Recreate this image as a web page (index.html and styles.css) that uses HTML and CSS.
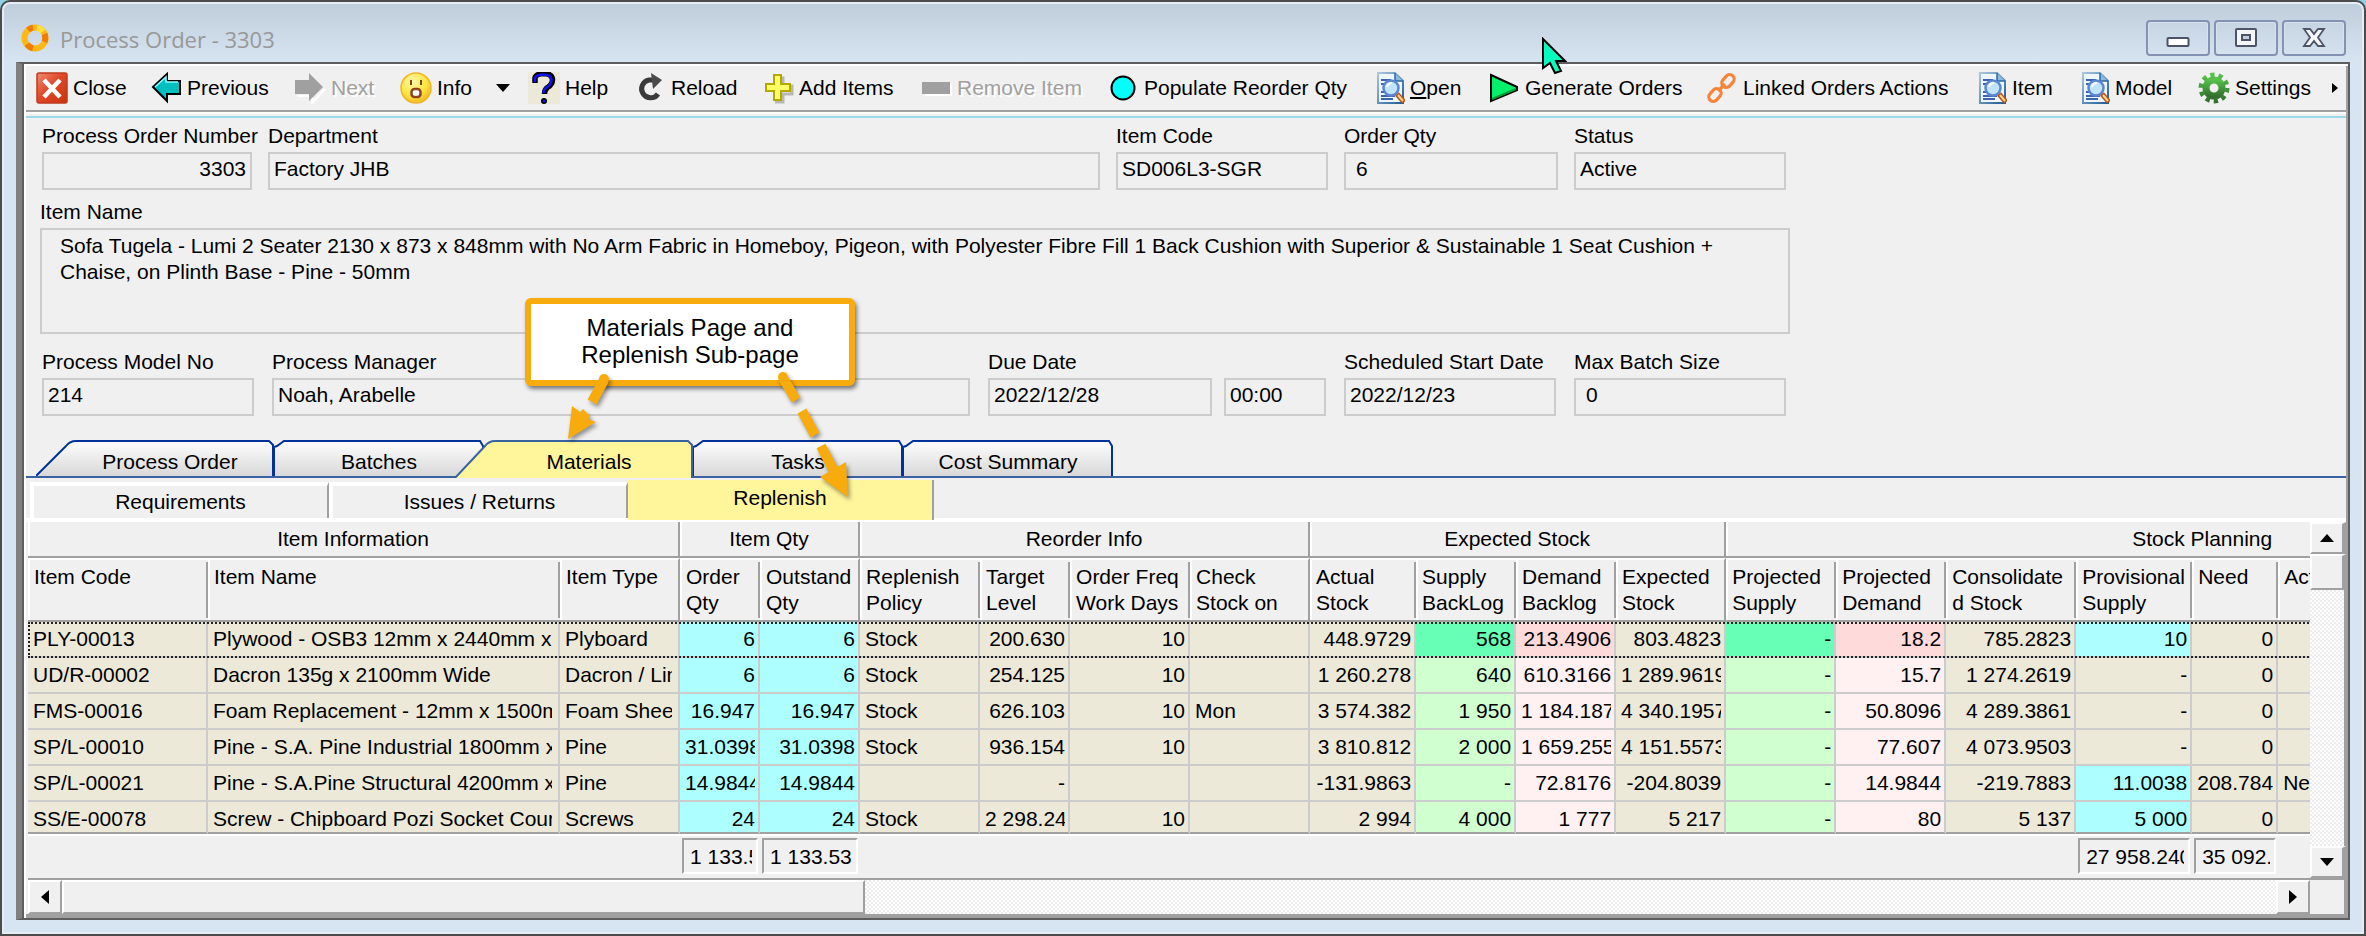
FILE: index.html
```html
<!DOCTYPE html>
<html lang="en">
<head>
<meta charset="utf-8">
<title>Process Order - 3303</title>
<link rel="stylesheet" href="styles.css">
</head>
<body>
<svg class="defs" aria-hidden="true">
  <defs>
    <linearGradient id="g-red" x1="0" y1="0" x2="1" y2="1"><stop offset="0" stop-color="#ee8d72"/><stop offset=".45" stop-color="#e0482a"/><stop offset="1" stop-color="#c8360c"/></linearGradient>
    <radialGradient id="g-face" cx=".4" cy=".3" r=".75"><stop offset="0" stop-color="#fff7b0"/><stop offset=".6" stop-color="#ffe43c"/><stop offset="1" stop-color="#efb51c"/></radialGradient>
    <linearGradient id="g-gear" x1="0" y1="0" x2="0" y2="1"><stop offset="0" stop-color="#57c14b"/><stop offset="1" stop-color="#33702f"/></linearGradient>
    <linearGradient id="g-doc" x1="0" y1="0" x2="1" y2="1"><stop offset="0" stop-color="#a9c6dc"/><stop offset="1" stop-color="#1f5c96"/></linearGradient>
    <linearGradient id="g-tab" x1="0" y1="0" x2="0" y2="1"><stop offset=".1" stop-color="#fafafa"/><stop offset="1" stop-color="#d8d8d8"/></linearGradient>
    <symbol id="i-doc" viewBox="0 0 32 32">
      <path d="M5 1h17l8 8v22H5z" fill="#eef6fd" stroke="url(#g-doc)" stroke-width="2"/>
      <path d="M22 1v8h8" fill="#8db9dc" stroke="#2b6aa3" stroke-width="1.500"/>
      <path d="M8 8h10M8 12h5M8 20h4M8 24h14M8 27h12" stroke="#3d62ae" stroke-width="2"/>
      <circle cx="18" cy="16" r="7.500" fill="#bfe3fb" stroke="#5b86cf" stroke-width="2.500"/>
      <path d="M14 15q1-4 5-4" fill="none" stroke="#fff" stroke-width="2"/>
      <path d="M24 22l7 8" stroke="#b4521b" stroke-width="5"/>
      <path d="M25 23l5 6" stroke="#ffd98a" stroke-width="2"/>
    </symbol>
  </defs>
</svg>
<div class="window">
  <header class="titlebar">
    <svg class="app-icon" viewBox="0 0 30 30" aria-hidden="true" fill="none" stroke-width="6">
      <circle cx="15" cy="15" r="10.500" stroke="#fdb813"/>
      <path d="M8 7a10.500 10.500 0 0 1 5-2.300M24.500 11a10.500 10.500 0 0 1 0 8M13 25.300a10.500 10.500 0 0 1-6-4" stroke="#f07c00"/>
      <path d="M17 4.700a10.500 10.500 0 0 1 6 3.600" stroke="#ffdf3a"/>
    </svg>
    <h1 class="title">Process Order - 3303</h1>
    <div class="window-buttons">
      <button type="button" aria-label="Minimize"><svg viewBox="0 0 24 24"><rect x="1.500" y="12" width="21" height="8" rx="1" fill="#fff" stroke="#4d5468" stroke-width="2"/></svg></button>
      <button type="button" aria-label="Maximize"><svg viewBox="0 0 24 24"><rect x="2" y="3" width="20" height="17" rx="1" fill="#f4f6f8" stroke="#4d5468" stroke-width="2"/><rect x="8" y="9" width="8" height="5" fill="#c4d0de" stroke="#4d5468" stroke-width="2"/></svg></button>
      <button type="button" aria-label="Close window"><svg viewBox="0 0 24 24"><path d="M2 3h6l4 5 4-5h6l-6 8.500 6 8.500h-6l-4-5-4 5H2l6-8.500z" fill="#f4f6f8" stroke="#4d5468" stroke-width="1.800"/></svg></button>
    </div>
  </header>

  <main class="panel">
    <nav class="toolbar" aria-label="Actions">
      <button type="button"><svg viewBox="0 0 32 32"><rect x="1" y="1" width="30" height="30" rx="2" fill="url(#g-red)" stroke="#c03a1c" stroke-width="1.500"/><path d="M8 8l16 17M24 8L8 25" stroke="#fff" stroke-width="4.500"/></svg>Close</button>
      <button type="button"><svg viewBox="0 0 32 32"><path d="M3 15L17 2v7h13v13H17v7z" fill="#00bfbf" stroke="#000" stroke-width="2"/><path d="M5 15L16 5v5h12" fill="none" stroke="#8ff" stroke-width="1.500"/></svg>Previous</button>
      <button type="button" disabled><svg viewBox="0 0 32 32"><path d="M31 17L18 31v-7H3" fill="none" stroke="#fff" stroke-width="2"/><path d="M1 8h14V1l14 14-14 14v-7H1z" fill="#a0a0a0"/></svg>Next</button>
      <button type="button"><svg viewBox="0 0 32 32"><circle cx="16" cy="16" r="15" fill="url(#g-face)" stroke="#f0b429" stroke-width="1.500"/><path d="M11 8v5M21 8v5" stroke="#7a4a10" stroke-width="2"/><rect x="11.500" y="17" width="9" height="8" rx="3" fill="#fff" stroke="#8e4420" stroke-width="2.500"/></svg>Info</button>
      <button type="button" class="drop" aria-label="More info"><svg viewBox="0 0 14 8"><path d="M0 0h14L7 8z"/></svg></button>
      <button type="button"><svg viewBox="0 0 32 32"><path fill="#ece9d8" d="M0 0h32v32H0z"/><path d="M7 11V6q1-4 8-4.500 9 0 9.500 6 0 5-5 8-3 2-3 6.500" fill="none" stroke="#000" stroke-width="5.500"/><path d="M7 10V6q1-3 8-3.500 8 0 8.500 5 0 5-5 8-3 2-3 5.500" fill="none" stroke="#1212e8" stroke-width="2.500"/><circle cx="16" cy="29" r="3" fill="#000"/><circle cx="16" cy="29" r="1.500" fill="#1212e8"/></svg>Help</button>
      <button type="button"><svg viewBox="0 0 32 32"><path d="M19 8h-4a9 9 0 1 0 9 14" fill="none" stroke="#3a3a3a" stroke-width="5"/><path d="M17 1l11 7-9 9z" fill="#4a4a4a"/></svg>Reload</button>
      <button type="button"><svg viewBox="0 0 32 32"><path d="M13 6h8v8h9v8h-9v8h-8" fill="none" stroke="#b8b8b0" stroke-width="3"/><path d="M12 3h7v9h9v7h-9v9h-7v-9H4v-7h8z" fill="#ffff66" stroke="#b3a800" stroke-width="2"/></svg>Add Items</button>
      <button type="button" disabled><svg viewBox="0 0 32 32"><path fill="#fff" d="M5 12h27v12H5z"/><path fill="#a0a0a0" d="M2 10h28v12H2z"/></svg>Remove Item</button>
      <button type="button"><svg viewBox="0 0 32 32"><circle cx="16" cy="16" r="11.500" fill="#0ff" stroke="#000" stroke-width="2"/></svg>Populate Reorder Qty</button>
      <button type="button"><svg><use href="#i-doc"/></svg><span><u>O</u>pen</span></button>
      <button type="button"><svg viewBox="0 0 32 32"><path d="M3 3l26 12v3L3 29z" fill="#00f06c" stroke="#000" stroke-width="2"/><path d="M4 27l24-10" stroke="#00a030" stroke-width="2"/></svg>Generate Orders</button>
      <button type="button"><svg viewBox="0 0 32 32" fill="none" stroke="#f5853b" stroke-width="3.200"><rect x="-7" y="-4.500" width="14" height="9" rx="4.500" transform="translate(22 9) rotate(-48)"/><rect x="-7" y="-4.500" width="14" height="9" rx="4.500" transform="translate(9 23) rotate(-48)"/><path d="M12 19l7-7"/></svg>Linked Orders Actions</button>
      <button type="button"><svg><use href="#i-doc"/></svg>Item</button>
      <button type="button"><svg><use href="#i-doc"/></svg>Model</button>
      <button type="button"><svg viewBox="0 0 32 32"><g fill="none" stroke="url(#g-gear)"><circle cx="16" cy="16" r="8" stroke-width="7"/><circle cx="16" cy="16" r="13" stroke-width="5" stroke-dasharray="4.200 3.969"/></g></svg>Settings</button>
      <button type="button" class="more" aria-label="More actions"><svg viewBox="0 0 6 10"><path d="M0 0l6 5-6 5z"/></svg></button>
    </nav>

    <form class="details">
      <div class="row row--order">
        <div class="field"><label for="po">Process Order Number</label><input id="po" class="num" value="3303" readonly></div>
        <div class="field"><label for="dept">Department</label><input id="dept" value="Factory JHB" readonly></div>
        <div class="field"><label for="code">Item Code</label><input id="code" value="SD006L3-SGR" readonly></div>
        <div class="field"><label for="qty">Order Qty</label><input id="qty" class="indent" value="6" readonly></div>
        <div class="field"><label for="status">Status</label><input id="status" value="Active" readonly></div>
      </div>
      <div class="row row--name">
        <div class="field"><label for="name">Item Name</label><textarea id="name" readonly>Sofa Tugela - Lumi 2 Seater 2130 x 873 x 848mm with No Arm Fabric in Homeboy, Pigeon, with Polyester Fibre Fill 1 Back Cushion with Superior &amp; Sustainable 1 Seat Cushion +
Chaise, on Plinth Base - Pine - 50mm</textarea></div>
      </div>
      <div class="row row--plan">
        <div class="field"><label for="model">Process Model No</label><input id="model" value="214" readonly></div>
        <div class="field"><label for="manager">Process Manager</label><input id="manager" value="Noah, Arabelle" readonly></div>
        <div class="field field--near"><label for="due">Due Date</label><input id="due" value="2022/12/28" readonly></div>
        <div class="field"><input aria-label="Due time" value="00:00" readonly></div>
        <div class="field"><label for="start">Scheduled Start Date</label><input id="start" value="2022/12/23" readonly></div>
        <div class="field"><label for="batch">Max Batch Size</label><input id="batch" class="indent" value="0" readonly></div>
      </div>
    </form>

    <div class="tabs" role="tablist" aria-label="Pages">
      <button type="button" role="tab" class="tab tab--slant"><svg viewBox="0 0 238 36" preserveAspectRatio="none"><path d="M0 36L30 6Q34 1 40 1H233L237 5V36" fill="url(#g-tab)" stroke="#039" stroke-width="2"/></svg><span>Process Order</span></button>
      <button type="button" role="tab" class="tab"><svg viewBox="0 0 210 36" preserveAspectRatio="none"><path d="M0 36V7L3 6 10 1H206L209 6V36" fill="url(#g-tab)" stroke="#039" stroke-width="2"/></svg><span>Batches</span></button>
      <button type="button" role="tab" class="tab tab--slant tab--active" aria-selected="true"><svg viewBox="0 0 238 38" preserveAspectRatio="none"><path d="M0 38L30 6Q34 1 40 1H233L237 5V38" fill="#fff59b" stroke="#3a62a0" stroke-width="2"/></svg><span>Materials</span></button>
      <button type="button" role="tab" class="tab"><svg viewBox="0 0 210 36" preserveAspectRatio="none"><path d="M0 36V7L3 6 10 1H206L209 6V36" fill="url(#g-tab)" stroke="#039" stroke-width="2"/></svg><span>Tasks</span></button>
      <button type="button" role="tab" class="tab"><svg viewBox="0 0 210 36" preserveAspectRatio="none"><path d="M0 36V7L3 6 10 1H206L209 6V36" fill="url(#g-tab)" stroke="#039" stroke-width="2"/></svg><span>Cost Summary</span></button>
    </div>
    <div class="subtabs" role="tablist" aria-label="Material pages">
      <button type="button" role="tab" class="subtab">Requirements</button>
      <button type="button" role="tab" class="subtab">Issues / Returns</button>
      <button type="button" role="tab" class="subtab subtab--active" aria-selected="true">Replenish</button>
    </div>

    <section class="grid">
      <div class="grid-view">
        <table>
          <colgroup>
            <col class="w180"><col class="w352"><col class="w120"><col class="w80"><col class="w100"><col class="w120"><col class="w90"><col class="w120"><col class="w120"><col class="w106"><col class="w100"><col class="w100"><col class="w110"><col class="w110"><col class="w110"><col class="w130"><col class="w116"><col class="w86"><col class="w402">
          </colgroup>
          <thead>
            <tr class="groups"><th colspan="3">Item Information</th><th colspan="2">Item Qty</th><th colspan="4">Reorder Info</th><th colspan="4">Expected Stock</th><th colspan="6">Stock Planning</th></tr>
            <tr class="heads"><th>Item Code</th><th>Item Name</th><th class="end">Item Type</th><th>Order<br>Qty</th><th class="end">Outstand<br>Qty</th><th>Replenish<br>Policy</th><th>Target<br>Level</th><th>Order Freq<br>Work Days</th><th class="end">Check<br>Stock on</th><th>Actual<br>Stock</th><th>Supply<br>BackLog</th><th>Demand<br>Backlog</th><th class="end">Expected<br>Stock</th><th>Projected<br>Supply</th><th>Projected<br>Demand</th><th>Consolidate<br>d Stock</th><th>Provisional<br>Supply</th><th>Need</th><th>Action</th></tr>
          </thead>
          <tbody>
            <tr class="selected"><td><span>PLY-00013</span></td><td><span>Plywood - OSB3 12mm x 2440mm x</span></td><td><span>Plyboard</span></td><td class="n cyan"><span>6</span></td><td class="n cyan"><span>6</span></td><td><span>Stock</span></td><td class="n"><span>200.630</span></td><td class="n"><span>10</span></td><td></td><td class="n"><span>448.9729</span></td><td class="n green"><span>568</span></td><td class="n pink"><span>213.4906</span></td><td class="n"><span>803.4823</span></td><td class="n green"><span>-</span></td><td class="n pink"><span>18.2</span></td><td class="n"><span>785.2823</span></td><td class="n cyan"><span>10</span></td><td class="n"><span>0</span></td><td></td></tr>
            <tr><td><span>UD/R-00002</span></td><td><span>Dacron 135g x 2100mm Wide</span></td><td><span>Dacron / Lining</span></td><td class="n cyan"><span>6</span></td><td class="n cyan"><span>6</span></td><td><span>Stock</span></td><td class="n"><span>254.125</span></td><td class="n"><span>10</span></td><td></td><td class="n"><span>1 260.278</span></td><td class="n green"><span>640</span></td><td class="n pink"><span>610.3166</span></td><td class="n"><span>1 289.9619</span></td><td class="n green"><span>-</span></td><td class="n pink"><span>15.7</span></td><td class="n"><span>1 274.2619</span></td><td class="n"><span>-</span></td><td class="n"><span>0</span></td><td></td></tr>
            <tr><td><span>FMS-00016</span></td><td><span>Foam Replacement - 12mm x 1500mm</span></td><td><span>Foam Sheets</span></td><td class="n cyan"><span>16.947</span></td><td class="n cyan"><span>16.947</span></td><td><span>Stock</span></td><td class="n"><span>626.103</span></td><td class="n"><span>10</span></td><td><span>Mon</span></td><td class="n"><span>3 574.382</span></td><td class="n green"><span>1 950</span></td><td class="n pink"><span>1 184.187</span></td><td class="n"><span>4 340.1957</span></td><td class="n green"><span>-</span></td><td class="n pink"><span>50.8096</span></td><td class="n"><span>4 289.3861</span></td><td class="n"><span>-</span></td><td class="n"><span>0</span></td><td></td></tr>
            <tr><td><span>SP/L-00010</span></td><td><span>Pine - S.A. Pine Industrial 1800mm x</span></td><td><span>Pine</span></td><td class="n cyan"><span>31.0398</span></td><td class="n cyan"><span>31.0398</span></td><td><span>Stock</span></td><td class="n"><span>936.154</span></td><td class="n"><span>10</span></td><td></td><td class="n"><span>3 810.812</span></td><td class="n green"><span>2 000</span></td><td class="n pink"><span>1 659.255</span></td><td class="n"><span>4 151.5573</span></td><td class="n green"><span>-</span></td><td class="n pink"><span>77.607</span></td><td class="n"><span>4 073.9503</span></td><td class="n"><span>-</span></td><td class="n"><span>0</span></td><td></td></tr>
            <tr><td><span>SP/L-00021</span></td><td><span>Pine - S.A.Pine Structural 4200mm x</span></td><td><span>Pine</span></td><td class="n cyan"><span>14.9844</span></td><td class="n cyan"><span>14.9844</span></td><td></td><td class="n"><span>-</span></td><td></td><td></td><td class="n"><span>-131.9863</span></td><td class="n green"><span>-</span></td><td class="n pink"><span>72.8176</span></td><td class="n"><span>-204.8039</span></td><td class="n green"><span>-</span></td><td class="n pink"><span>14.9844</span></td><td class="n"><span>-219.7883</span></td><td class="n cyan"><span>11.0038</span></td><td class="n"><span>208.784</span></td><td><span>New</span></td></tr>
            <tr><td><span>SS/E-00078</span></td><td><span>Screw - Chipboard Pozi Socket Countersunk</span></td><td><span>Screws</span></td><td class="n cyan"><span>24</span></td><td class="n cyan"><span>24</span></td><td><span>Stock</span></td><td class="n"><span>2 298.24</span></td><td class="n"><span>10</span></td><td></td><td class="n"><span>2 994</span></td><td class="n green"><span>4 000</span></td><td class="n pink"><span>1 777</span></td><td class="n"><span>5 217</span></td><td class="n green"><span>-</span></td><td class="n pink"><span>80</span></td><td class="n"><span>5 137</span></td><td class="n cyan"><span>5 000</span></td><td class="n"><span>0</span></td><td></td></tr>
          </tbody>
          <tfoot>
            <tr><td colspan="3"></td><td><div class="total"><span>1 133.53</span></div></td><td><div class="total"><span>1 133.53</span></div></td><td colspan="11"></td><td><div class="total"><span>27 958.240</span></div></td><td><div class="total"><span>35 092.42</span></div></td><td></td></tr>
          </tfoot>
        </table>
      </div>
      <div class="vscroll">
        <button type="button" aria-label="Scroll up"><svg viewBox="0 0 14 8"><path d="M0 8h14L7 0z"/></svg></button>
        <div class="thumb"></div>
        <div class="track"></div>
        <button type="button" aria-label="Scroll down"><svg viewBox="0 0 14 8"><path d="M0 0h14L7 8z"/></svg></button>
      </div>
      <div class="hscroll">
        <button type="button" aria-label="Scroll left"><svg viewBox="0 0 8 14"><path d="M8 0v14L0 7z"/></svg></button>
        <div class="thumb"></div>
        <div class="track"></div>
        <button type="button" aria-label="Scroll right"><svg viewBox="0 0 8 14"><path d="M0 0v14l8-7z"/></svg></button>
      </div>
      <div class="corner"></div>
    </section>
  </main>

  <div class="callout">Materials Page and<br>Replenish Sub-page</div>
  <svg class="arrows" viewBox="0 0 300 130" aria-hidden="true" fill="#f8ab0c" stroke="#f8ab0c" stroke-width="10">
    <path d="M44 10L32 32M223 8l13 22M242 41l13 24M261 76l13 25"/>
    <circle cx="44" cy="9" r="5" stroke="none"/>
    <circle cx="223" cy="7" r="5" stroke="none"/>
    <path stroke="none" d="M12 36l8 6 3-3 7 7-2 3 8 3L8 69zM260 107l26-15 2 35z"/>
  </svg>
  <svg class="cursor" viewBox="0 0 26 38" aria-hidden="true"><path d="M2 2v29l7-5 5 10 6-2-5-10h9z" fill="#00ffc0" stroke="#000" stroke-width="2"/></svg>
</div>
</body>
</html>
```
FILE: styles.css
```css
* { box-sizing: border-box; }

body {
  margin: 0;
  background: #8fd0e2;
  color: #000;
  font: 21px/24px "Liberation Sans", Arial, sans-serif;
}

button, input, textarea { font: inherit; color: inherit; margin: 0; border-radius: 0; }
button { padding: 0; border: 0; background: none; white-space: nowrap; }
svg { display: block; flex: none; }
.defs { position: absolute; width: 0; height: 0; }

.window {
  position: relative;
  display: flex;
  flex-direction: column;
  min-height: 100vh;
  padding: 0 14px 14px 12px;
  border: 2px solid #4c4c4c;
  border-radius: 10px 10px 0 0;
  background: linear-gradient(#bfccd9, #d7e4f1 60px);
  box-shadow: inset 0 0 0 2px #e6edf5;
}

/* Title bar */
.titlebar {
  display: flex;
  align-items: center;
  height: 60px;
  padding: 12px 4px 0 6px;
}
.app-icon { width: 30px; height: 30px; }
.title {
  flex: 1;
  margin: 2px 0 0 10px;
  color: #989898;
  font: 400 22px/30px "Open Sans", sans-serif;
}
.window-buttons { display: flex; gap: 4px; }
.window-buttons button {
  display: grid;
  place-items: center;
  width: 64px;
  height: 36px;
  border: 2px solid #8493b3;
  border-radius: 4px;
  box-shadow: inset 0 0 0 1px #d8e2ee;
}
.window-buttons svg { width: 24px; height: 24px; }

.panel {
  flex: 1;
  display: flex;
  flex-direction: column;
  margin-left: 2px;
  border: 2px solid #5e5e5e;
  border-left: 6px solid #808080;
  background: #f0f0f0;
  box-shadow: inset 2px 0 #5e5e5e, inset 4px 2px #fff, inset -2px -4px #a0a0a0;
  padding: 2px 2px 4px 4px;
}

/* Toolbar */
.toolbar {
  display: grid;
  grid-template-columns:
    114fr 144fr 106fr 90fr 38fr 106fr 128fr 158fr 187fr
    266fr 115fr 218fr 269fr 103fr 120fr 126fr 22fr;
  height: 52px;
  padding: 0 0 8px 10px;
  background: linear-gradient(#a0a0a0, #a0a0a0) 0 44px / 100% 2px no-repeat,
    linear-gradient(#fff, #fff) 0 46px / 100% 2px no-repeat;
  border-bottom: 2px solid #9bd8e8;
}
.toolbar button { display: flex; align-items: center; gap: 5px; min-width: 0; padding-top: 2px; }
.toolbar svg { width: 32px; height: 32px; }
.toolbar button:disabled { color: #a0a0a0; text-shadow: 2px 2px #fff; }
.toolbar .drop { padding-left: 6px; }
.toolbar .drop svg { width: 14px; height: 8px; }
.toolbar .more { padding-left: 8px; }
.toolbar .more svg { width: 6px; height: 10px; }

/* Order details */
.details { padding: 6px 0 24px; }
.row { display: grid; align-items: end; padding-left: 16px; }
.row--order { grid-template-columns: 226fr 848fr 228fr 230fr 212fr 560fr; }
.row--name { grid-template-columns: 1750fr 556fr; margin: 10px 0 16px; padding-left: 14px; }
.row--plan { grid-template-columns: 230fr 716fr 236fr 120fr 230fr 212fr 560fr; }
.field { display: flex; flex-direction: column; gap: 4px; min-width: 0; padding-right: 16px; }
.row--plan .field { padding-right: 18px; }
.row--plan .field--near { padding-right: 12px; }
.row .field:last-child { padding-right: 0; }
.field label { white-space: nowrap; }
.field input, .field textarea {
  width: 100%;
  height: 38px;
  padding: 0 4px 4px;
  border: 2px solid #ccc;
  outline: 0;
  background: #f0f0f0;
}
.field .num { text-align: right; }
.field .indent { padding-left: 10px; }
.field textarea {
  height: 106px;
  padding: 3px 18px;
  line-height: 26px;
  resize: none;
  overflow: hidden;
}

/* Page tabs */
.tabs {
  display: flex;
  align-items: flex-start;
  height: 38px;
  padding-left: 10px;
  background: linear-gradient(#3a62a0, #3a62a0) 0 36px / 100% 2px no-repeat;
}
.tab { position: relative; width: 210px; height: 36px; padding-top: 8px; }
.tab svg { position: absolute; inset: 0; width: 100%; height: 100%; }
.tab span { position: relative; }
.tab--slant { width: 238px; padding-left: 30px; }
.tab--active { z-index: 1; height: 38px; margin-left: -29px; padding-bottom: 2px; }

.subtabs { display: flex; align-items: flex-end; height: 40px; padding-left: 4px; }
.subtab {
  width: 299px;
  height: 36px;
  border: solid #fff;
  border-width: 4px 2px 0 4px;
  border-right-color: #a0a0a0;
}
.subtab--active {
  position: relative;
  width: 306px;
  height: 40px;
  margin-bottom: -2px;
  padding-bottom: 4px;
  border-width: 0 2px 0 0;
  background: #fff59b;
}

/* Replenish grid */
.grid {
  flex: 1;
  display: grid;
  grid-template-columns: minmax(0, 1fr) 36px;
  grid-template-rows: 1fr 34px;
  padding-left: 2px;
  border-top: 4px solid #fff;
}
.grid-view { overflow: hidden; border-bottom: 2px solid #a0a0a0; }
table { width: 2652px; table-layout: fixed; border-collapse: separate; border-spacing: 0; }
.w80 { width: 80px; }
.w86 { width: 86px; }
.w90 { width: 90px; }
.w100 { width: 100px; }
.w106 { width: 106px; }
.w110 { width: 110px; }
.w116 { width: 116px; }
.w120 { width: 120px; }
.w130 { width: 130px; }
.w180 { width: 180px; }
.w352 { width: 352px; }
.w402 { width: 402px; }
th, td { padding: 0; font-weight: 400; white-space: nowrap; }
.groups th {
  height: 36px;
  border-right: 2px solid #a0a0a0;
  border-bottom: 2px solid #a0a0a0;
  box-shadow: inset 2px 0 #fff;
}
.heads th {
  height: 64px;
  padding: 4px 0 0 6px;
  border-top: 2px solid #fff;
  border-bottom: 2px solid #a0a0a0;
  background: linear-gradient(#a0a0a0, #a0a0a0) right 0 top 2px / 2px 56px no-repeat;
  line-height: 26px;
  text-align: left;
  vertical-align: top;
  box-shadow: inset 2px 0 #fff;
}
.heads .end { border-right: 2px solid #a0a0a0; background: none; }

tbody td {
  height: 36px;
  padding: 0 6px 0 5px;
  border: solid #ccc;
  border-width: 0 2px 2px 0;
  background: #ece9d8;
  line-height: 34px;
}
tbody .n { padding-right: 3px; text-align: right; }
tbody span { display: block; overflow: hidden; }
tbody tr:last-child td { height: 32px; border-bottom-color: #a0a0a0; }
tbody tr:last-child span { height: 30px; }
tbody .cyan { background: #adffff; }
tbody .green { background: #d0ffd0; }
tbody .pink { background: #fff1f1; }
.selected .green { background: #66ffb5; }
.selected .pink { background: #ffdada; }
.selected { outline: 2px dotted #222; outline-offset: -2px; }

tfoot td { height: 44px; padding: 2px 2px 0; border-top: 2px solid #fff; vertical-align: top; }
.total {
  height: 36px;
  padding: 0 4px 0 6px;
  border: 2px solid;
  border-color: #a0a0a0 #fff #fff #a0a0a0;
  line-height: 34px;
}
.total span { display: block; overflow: hidden; }

/* Scroll bars */
.vscroll, .hscroll { display: flex; }
.vscroll { flex-direction: column; border-bottom: 2px solid #a0a0a0; }
.vscroll button, .hscroll button, .thumb {
  display: grid;
  place-items: center;
  border: 2px solid;
  border-color: #fff #a0a0a0 #a0a0a0 #fff;
  background: #f0f0f0;
}
.vscroll button { height: 32px; border-right-width: 4px; }
.vscroll .thumb { height: 36px; border-right-width: 4px; }
.hscroll button { width: 34px; }
.hscroll .thumb { flex: 800; }
.vscroll svg { width: 14px; height: 8px; }
.hscroll svg { width: 8px; height: 14px; }
.track {
  flex: 1;
  background: repeating-conic-gradient(#fff 0 25%, #ededed 0 50%) 0 0 / 4px 4px;
}
.vscroll .track { border-right: 2px solid #a0a0a0; }
.hscroll .track { flex: 1414; }
.corner { border-right: 2px solid #a0a0a0; }

/* Annotation */
.callout {
  position: absolute;
  left: 523px;
  top: 296px;
  width: 330px;
  padding: 10px 0 12px;
  border: 6px solid #f8ab0c;
  border-radius: 6px;
  background: #fff;
  box-shadow: 2px 3px 4px rgba(0, 0, 0, .5);
  font-size: 24px;
  line-height: 27px;
  text-align: center;
}
.arrows {
  position: absolute;
  left: 558px;
  top: 368px;
  width: 300px;
  height: 130px;
  z-index: 2;
  filter: drop-shadow(2px 3px 2px rgba(0, 0, 0, .4));
}
.cursor { position: absolute; left: 1539px; top: 35px; width: 26px; height: 38px; }
```
